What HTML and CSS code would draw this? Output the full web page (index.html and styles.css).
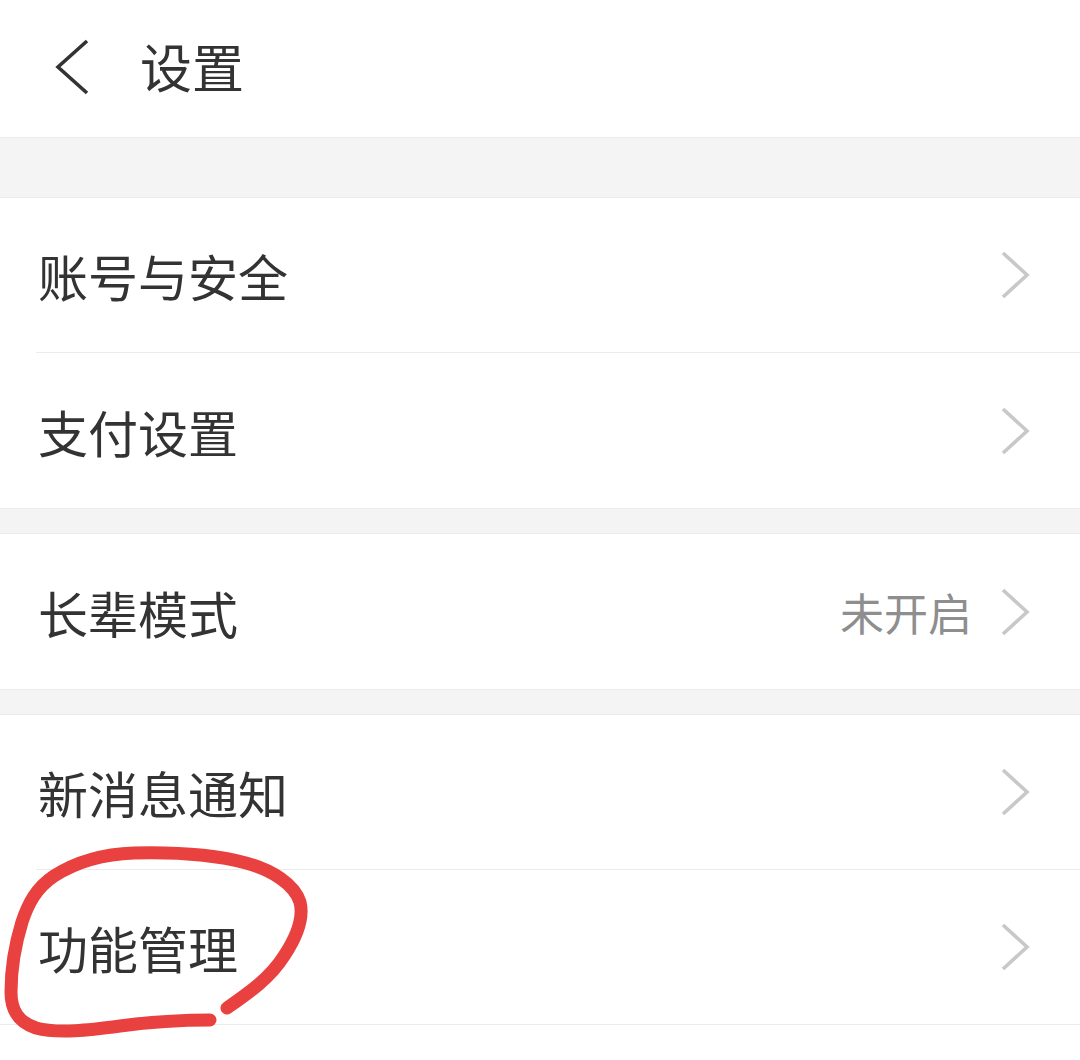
FILE: index.html
```html
<!DOCTYPE html>
<html lang="zh-CN">
<head>
<meta charset="utf-8">
<title>设置</title>
<link rel="stylesheet" href="styles.css">
</head>
<body>
<div class="page">
  <header class="topbar">
    <svg class="back" width="36" height="58" viewBox="0 0 36 58"><polyline points="33,3 4,29 33,55" fill="none" stroke="#333" stroke-width="3.6" stroke-linecap="butt" stroke-linejoin="miter"/></svg>
    <h1 class="title">设置</h1>
  </header>
  <div class="band band-lg"></div>
  <section class="group">
    <div class="row"><span class="label">账号与安全</span><span class="right"><svg class="chev" width="30" height="48" viewBox="0 0 30 48"><polyline points="3,2 27,24 3,46" fill="none" stroke="#c8c8c8" stroke-width="3.6"/></svg></span></div>
    <div class="row last"><span class="label">支付设置</span><span class="right"><svg class="chev" width="30" height="48" viewBox="0 0 30 48"><polyline points="3,2 27,24 3,46" fill="none" stroke="#c8c8c8" stroke-width="3.6"/></svg></span></div>
  </section>
  <div class="band"></div>
  <section class="group">
    <div class="row last"><span class="label">长辈模式</span><span class="right"><span class="value">未开启</span><svg class="chev" width="30" height="48" viewBox="0 0 30 48"><polyline points="3,2 27,24 3,46" fill="none" stroke="#c8c8c8" stroke-width="3.6"/></svg></span></div>
  </section>
  <div class="band"></div>
  <section class="group">
    <div class="row"><span class="label">新消息通知</span><span class="right"><svg class="chev" width="30" height="48" viewBox="0 0 30 48"><polyline points="3,2 27,24 3,46" fill="none" stroke="#c8c8c8" stroke-width="3.6"/></svg></span></div>
    <div class="row bottom"><span class="label">功能管理</span><span class="right"><svg class="chev" width="30" height="48" viewBox="0 0 30 48"><polyline points="3,2 27,24 3,46" fill="none" stroke="#c8c8c8" stroke-width="3.6"/></svg></span></div>
  </section>
  <svg class="scribble" width="1080" height="1060" viewBox="0 0 1080 1060">
    <path d="M227,1008 C250,992 270,978 284,956 C296,938 304,918 300,902 C294,884 272,870 246,863 C216,855 176,852 134,853 C104,854 76,862 54,876 C36,888 28,904 22,922 C14,948 11,972 11,992 C11,1010 18,1022 36,1028 C58,1034 90,1030 120,1026 C150,1022 180,1020 210,1020" fill="none" stroke="#e8413f" stroke-width="13" stroke-linecap="round" stroke-linejoin="round"/>
  </svg>
</div>
</body>
</html>
```

FILE: styles.css
```css
html, body {
  margin: 0;
  padding: 0;
  background: #ffffff;
}
body {
  font-family: "Noto Sans CJK SC", "Noto Sans", sans-serif;
  color: #333333;
}
.page {
  position: relative;
  width: 1080px;
  min-height: 1060px;
  background: #ffffff;
  overflow: hidden;
}
.topbar {
  height: 137px;
  display: flex;
  align-items: center;
  padding-left: 54px;
  box-sizing: border-box;
}
.back {
  display: block;
  margin-top: -4px;
}
.title {
  margin: 0 0 0 50px;
  font-size: 52px;
  font-weight: 400;
  line-height: 1;
  margin-top: -6px;
  color: #333;
}
.band {
  height: 24px;
  background: #f4f4f4;
  border-top: 1px solid #ebebeb;
  border-bottom: 1px solid #ebebeb;
}
.band-lg {
  height: 59px;
}
.group {
  background: #ffffff;
}
.row {
  height: 155px;
  margin-left: 36px;
  padding-right: 50px;
  box-sizing: border-box;
  display: flex;
  align-items: center;
  justify-content: space-between;
  border-bottom: 1px solid #ebebeb;
}
.row.last {
  border-bottom: none;
  height: 155px;
}
.row.bottom {
  margin-left: 0;
  padding-left: 36px;
}
.label {
  font-size: 50px;
  line-height: 1;
  color: #333333;
  margin-left: 2px;
}
.right {
  display: flex;
  align-items: center;
}
.value {
  font-size: 44px;
  line-height: 1;
  color: #8e8e8e;
  margin-right: 28px;
}
.chev {
  display: block;
}
.scribble {
  position: absolute;
  left: 0;
  top: 0;
  pointer-events: none;
}
```
